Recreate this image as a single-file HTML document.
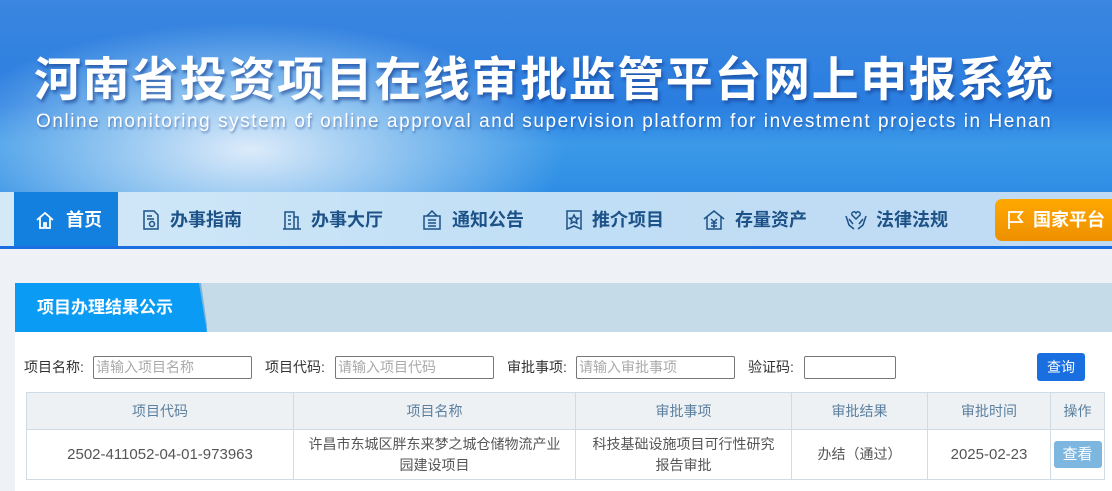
<!DOCTYPE html>
<html><head><meta charset="utf-8"><style>
*{margin:0;padding:0;box-sizing:border-box}
body{width:1112px;height:491px;overflow:hidden;background:#eef2f6;font-family:"Liberation Sans","Noto Sans CJK SC",sans-serif;position:relative}
.hdr{position:absolute;left:0;top:0;width:1112px;height:192px;background:radial-gradient(ellipse 420px 170px at 250px 150px,#dcebfa 0%,#8ec3f0 35%,rgba(60,140,230,0) 75%),linear-gradient(180deg,#3a86e0 0%,#2a7ee0 55%,#3b99e8 75%,#2f8ee4 100%)}
.t1{position:absolute;left:34px;top:41px;font-size:47px;font-weight:bold;color:#fff;letter-spacing:1.6px;white-space:nowrap;text-shadow:2px 3px 3px rgba(20,60,140,.6)}
.t2{position:absolute;left:36px;top:111px;font-size:19px;color:#fff;letter-spacing:1.55px;white-space:nowrap;text-shadow:1px 2px 2px rgba(20,60,140,.5)}
.nav{position:absolute;left:0;top:192px;width:1112px;height:57px;background:linear-gradient(90deg,#d3e9f8,#c0def5 50%,#c0daf3);border-bottom:3px solid #1a6ee0}
.nav .it{position:absolute;top:0;height:54px;line-height:56px;font-size:18px;font-weight:bold;color:#1c5287;white-space:nowrap}
.nav .act{left:14px;width:104px;background:#1380e0;color:#fff}
.nav svg{position:absolute;top:18px}
.gj{position:absolute;left:995px;top:199px;width:125px;height:42px;border-radius:7px;background:linear-gradient(#ffa800,#ee9000);color:#fff;font-size:18px;font-weight:bold;line-height:42px;padding-left:38px}
.panel{position:absolute;left:15px;top:283px;width:1097px;height:208px;background:#fff}
.ph{height:49px;background:#c5dbe7;position:relative}
.tab{position:absolute;left:0;top:0;width:192px;height:49px;background:#0a9bf5;color:#fff;font-weight:bold;font-size:17px;line-height:50px;padding-left:22px;clip-path:polygon(0 0,184px 0,192px 49px,0 49px)}
.tabs{position:absolute;left:0;top:0;width:192px;height:49px;background:#7eb3d8;clip-path:polygon(184px 0,186px 0,193px 49px,192px 49px)}
.lbl{position:absolute;top:357px;font-size:14px;color:#333}
.inp{position:absolute;top:356px;height:23px;border:1px solid #777;border-radius:2px;font-size:14px;color:#aaa;padding-left:2px;line-height:21px;background:#fff}
.btn{position:absolute;left:1037px;top:353px;width:48px;height:28px;background:#1a6fe0;color:#fff;border-radius:3px;font-size:14px;text-align:center;line-height:28px}
table{position:absolute;left:26px;top:392px;border-collapse:collapse;width:1079px;font-size:14px}
td,th{border:1px solid #cfdce6;text-align:center;font-weight:normal}
th{background:#edf1f4;color:#5b7f9e;height:37px}
td{color:#555;height:50px;line-height:21px}
td.n{font-size:15px}
.vb{display:inline-block;width:48px;height:27px;background:#7db6df;color:#fff;border-radius:3px;line-height:27px;font-size:15px}
</style></head><body>
<div class="hdr"><div class="t1">河南省投资项目在线审批监管平台网上申报系统</div><div class="t2">Online monitoring system of online approval and supervision platform for investment projects in Henan</div></div>
<div class="nav">
<div class="it act"><svg width="20" height="20" viewBox="0 0 20 20" style="left:21px;top:18px" fill="none" stroke="#fff" stroke-width="1.8"><path d="M2 10L10 3l8 7M5 8v10h4v-5h2v5h4V8"/></svg><span style="margin-left:52px">首页</span></div>
<div class="it" style="left:142px"><svg width="18" height="20" viewBox="0 0 18 20" style="left:0" fill="none" stroke="#1c5287" stroke-width="1.5"><path d="M2 1h10l4 4v14H2z M5 6h5M5 9h7"/><circle cx="10" cy="14" r="2.5"/></svg><span style="margin-left:28px">办事指南</span></div>
<div class="it" style="left:282px"><svg width="20" height="20" viewBox="0 0 20 20" style="left:0" fill="none" stroke="#1c5287" stroke-width="1.5"><path d="M1 19h18M3 19V2h9v17M12 7h4v12M6 6h3M6 10h3M6 14h3"/></svg><span style="margin-left:29px">办事大厅</span></div>
<div class="it" style="left:423px"><svg width="18" height="20" viewBox="0 0 18 20" style="left:0" fill="none" stroke="#1c5287" stroke-width="1.5"><path d="M9 1L4 6h10zM1 6h16v13H1zM5 10h8M5 13h8M5 16h8"/></svg><span style="margin-left:29px">通知公告</span></div>
<div class="it" style="left:565px"><svg width="18" height="20" viewBox="0 0 18 20" style="left:0" fill="none" stroke="#1c5287" stroke-width="1.5"><path d="M2 1h14v18l-7-3-7 3z"/><path d="M9 5l1.5 3 3 .3-2.3 2 .7 3L9 11.8 6.1 13.3l.7-3-2.3-2 3-.3z"/></svg><span style="margin-left:27px">推介项目</span></div>
<div class="it" style="left:703px"><svg width="22" height="20" viewBox="0 0 22 20" style="left:0" fill="none" stroke="#1c5287" stroke-width="1.5"><path d="M1 9L11 1l10 8M4 7v12h14V7M8 9l3 3 3-3M11 12v6M8 13h6M8 16h6"/></svg><span style="margin-left:32px">存量资产</span></div>
<div class="it" style="left:845px"><svg width="22" height="20" viewBox="0 0 22 20" style="left:0" fill="none" stroke="#1c5287" stroke-width="1.5"><path d="M11 9L7 5a2 2 0 0 1 4-2 2 2 0 0 1 4 2zM1 6l3 9 5 4M21 6l-3 9-5 4M4 9l4 5M18 9l-4 5"/></svg><span style="margin-left:31px">法律法规</span></div>
</div>
<div class="gj"><svg width="18" height="20" viewBox="0 0 18 20" style="position:absolute;left:12px;top:11px" fill="none" stroke="#fff" stroke-width="1.8"><path d="M2 19V2h13l-4 5 4 5H2"/></svg>国家平台</div>
<div class="panel"><div class="ph"><div class="tabs"></div><div class="tab">项目办理结果公示</div></div></div>
<div class="lbl" style="left:24px">项目名称:</div><div class="inp" style="left:93px;width:159px">请输入项目名称</div>
<div class="lbl" style="left:265px">项目代码:</div><div class="inp" style="left:335px;width:159px">请输入项目代码</div>
<div class="lbl" style="left:507px">审批事项:</div><div class="inp" style="left:576px;width:159px">请输入审批事项</div>
<div class="lbl" style="left:748px">验证码:</div><div class="inp" style="left:804px;width:92px"></div>
<div class="btn">查询</div>
<table>
<tr><th style="width:267px">项目代码</th><th style="width:282px">项目名称</th><th style="width:216px">审批事项</th><th style="width:136px">审批结果</th><th style="width:123px">审批时间</th><th>操作</th></tr>
<tr><td class="n">2502-411052-04-01-973963</td><td>许昌市东城区胖东来梦之城仓储物流产业<br>园建设项目</td><td>科技基础设施项目可行性研究<br>报告审批</td><td>办结（通过）</td><td class="n">2025-02-23</td><td><span class="vb">查看</span></td></tr>
</table>
</body></html>
